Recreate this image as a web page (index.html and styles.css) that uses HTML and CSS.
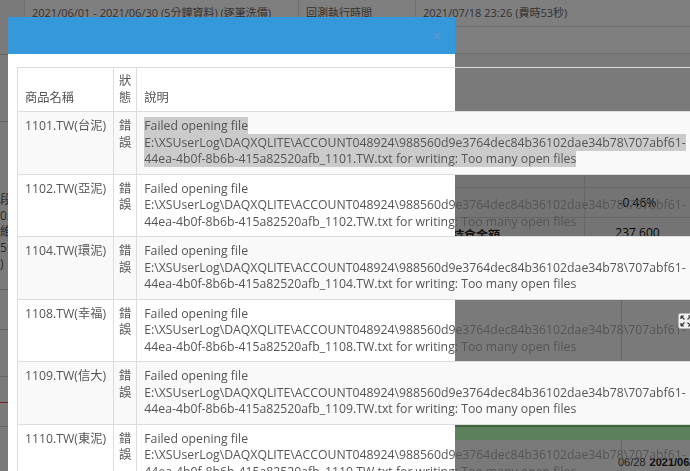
FILE: index.html
```html
<!DOCTYPE html>
<html>
  <head>
    <meta charset="utf-8" />
    <link rel="stylesheet" href="styles.css">
  </head>
  <body>
    <div class="page">
      <div class="side">
        <div class="s1"></div>
        <div class="s2"></div>
        <div class="s3">
          <p>段落</p>
          <p>0.5</p>
          <p>維持</p>
          <p>5分</p>
          <p>)</p>
        </div>
        <div class="s4"></div>
        <div class="s5"></div>
        <div class="s6"></div>
        <div class="s7"></div>
      </div>
      <div class="main">
        <div class="info">
          <div class="c1">2021/06/01 - 2021/06/30 (5分鐘資料) (逐筆洗價)</div>
          <div class="c2">回測執行時間</div>
          <div class="c3">2021/07/18 23:26 (費時53秒)</div>
        </div>
        <div class="info">
          <div class="c1">初始資金</div>
          <div class="c2">交易成本</div>
          <div class="c3"></div>
        </div>
        <div class="gap-a"></div>
        <div class="stats">
          <div></div><div></div><div></div>
          <div></div><div></div><div class="val">-0.46%</div>
          <div></div><div class="label">持倉金額</div><div class="val">237,600</div>
        </div>
        <div class="gap-b"></div>
        <div class="chart">
          <button class="expand">
            <svg width="16" height="16" viewBox="0 0 16 16">
              <rect x="0.5" y="0.5" width="15" height="15" rx="2" fill="#f2f2f2" stroke="#b5b5b5" />
              <path d="M3 3l3.5 3.5M3 3h3M3 3v3M13 3l-3.5 3.5M13 3h-3M13 3v3M3 13l3.5-3.5M3 13h3M3 13v-3M13 13l-3.5-3.5M13 13h-3M13 13v-3" stroke="#333" stroke-width="1.2" fill="none" />
            </svg>
          </button>
          <div class="plot"></div>
          <div class="bar"></div>
          <div class="axis">
            <span>06/28</span>
            <span class="today">2021/06/30</span>
          </div>
        </div>
      </div>
    </div>

    <div class="backdrop"></div>

    <div class="modal">
      <div class="modal-header">
        <span class="close">&times;</span>
      </div>
      <div class="modal-body">
        <table>
          <thead>
            <tr>
              <th class="name">商品名稱</th>
              <th class="state">狀態</th>
              <th>說明</th>
            </tr>
          </thead>
          <tbody>
            <tr>
              <td class="name">1101.TW(台泥)</td>
              <td class="state">錯誤</td>
              <td class="desc"><span class="selected">Failed opening file<br>E:\XSUserLog\DAQXQLITE\ACCOUNT048924\988560d9e3764dec84b36102dae34b78\707abf61-<br>44ea-4b0f-8b6b-415a82520afb_1101.TW.txt for writing: Too many open files</span></td>
            </tr>
            <tr>
              <td class="name">1102.TW(亞泥)</td>
              <td class="state">錯誤</td>
              <td class="desc">Failed opening file<br>E:\XSUserLog\DAQXQLITE\ACCOUNT048924\988560d9e3764dec84b36102dae34b78\707abf61-<br>44ea-4b0f-8b6b-415a82520afb_1102.TW.txt for writing: Too many open files</td>
            </tr>
            <tr>
              <td class="name">1104.TW(環泥)</td>
              <td class="state">錯誤</td>
              <td class="desc">Failed opening file<br>E:\XSUserLog\DAQXQLITE\ACCOUNT048924\988560d9e3764dec84b36102dae34b78\707abf61-<br>44ea-4b0f-8b6b-415a82520afb_1104.TW.txt for writing: Too many open files</td>
            </tr>
            <tr>
              <td class="name">1108.TW(幸福)</td>
              <td class="state">錯誤</td>
              <td class="desc">Failed opening file<br>E:\XSUserLog\DAQXQLITE\ACCOUNT048924\988560d9e3764dec84b36102dae34b78\707abf61-<br>44ea-4b0f-8b6b-415a82520afb_1108.TW.txt for writing: Too many open files</td>
            </tr>
            <tr>
              <td class="name">1109.TW(信大)</td>
              <td class="state">錯誤</td>
              <td class="desc">Failed opening file<br>E:\XSUserLog\DAQXQLITE\ACCOUNT048924\988560d9e3764dec84b36102dae34b78\707abf61-<br>44ea-4b0f-8b6b-415a82520afb_1109.TW.txt for writing: Too many open files</td>
            </tr>
            <tr>
              <td class="name">1110.TW(東泥)</td>
              <td class="state">錯誤</td>
              <td class="desc">Failed opening file<br>E:\XSUserLog\DAQXQLITE\ACCOUNT048924\988560d9e3764dec84b36102dae34b78\707abf61-<br>44ea-4b0f-8b6b-415a82520afb_1110.TW.txt for writing: Too many open files</td>
            </tr>
          </tbody>
        </table>
      </div>
    </div>
  </body>
</html>
```

FILE: styles.css
```css
* {
  margin: 0;
  padding: 0;
  box-sizing: border-box;
}

html,
body {
  height: 100%;
  overflow: hidden;
}

body {
  font-family: 'Open Sans', 'Noto Sans CJK TC', sans-serif;
  font-size: 12px;
  color: #666;
  background-color: #f4f4f4;
}

/* 배경 페이지 */
.page {
  display: flex;
  height: 100%;
}

.side {
  width: 25px;
  flex: none;
  overflow: hidden;
  white-space: nowrap;
  border-right: 1px solid #dcdcdc;
  color: #555;
}

.side > div {
  border-bottom: 1px solid #cfcfcf;
}

.s1 { height: 55px; }
.s2 { height: 67px; }
.s3 {
  height: 168px;
  padding-top: 70px;
  line-height: 16px;
}
.s4 { height: 40px; }
.s5 { height: 47px; }
.s6 {
  height: 26px;
  border-bottom-color: #e04040 !important;
}
.s7 { height: 24px; }

.main {
  flex: 1;
  min-width: 0;
  display: flex;
  flex-direction: column;
}

.info {
  display: flex;
  height: 27px;
  line-height: 26px;
  font-size: 11px;
  white-space: nowrap;
  background-color: #fff;
  border-bottom: 1px solid #dcdcdc;
}

.info > div {
  padding: 0 7px;
}

.info .c1 {
  width: 273px;
}

.info .c2 {
  width: 117px;
  border-left: 1px solid #dcdcdc;
}

.info .c3 {
  flex: 1;
  border-left: 1px solid #dcdcdc;
}

.gap-a {
  height: 106px;
}

.stats {
  display: grid;
  grid-template-columns: 427px 132px 1fr;
  grid-template-rows: 28px 30px 30px;
  background-color: #e8e8e8;
  line-height: 26px;
  white-space: nowrap;
}

.stats > div {
  border-bottom: 1px solid #cdcdcd;
}

.stats > div:nth-child(3n) {
  border-left: 1px solid #cdcdcd;
}

.stats .label {
  color: #222;
  font-weight: bold;
  padding-top: 5px;
}

.stats .val {
  text-align: center;
  color: #111;
  padding-top: 2px;
}

.gap-b {
  height: 42px;
}

.chart {
  position: relative;
  flex: 1;
  display: flex;
  flex-direction: column;
  background-image: linear-gradient(90deg, transparent 596px, #d0d0d0 596px, #d0d0d0 597px, transparent 597px);
}

.plot {
  height: 135px;
}

.bar {
  height: 15px;
  background-color: #b8ffb8;
  border-top: 2px solid #7cc97c;
}

.axis {
  display: flex;
  gap: 4px;
  padding: 15px 0 0 593px;
  line-height: 14px;
  font-family: 'Liberation Sans', sans-serif;
  font-size: 11px;
  color: #444;
  white-space: nowrap;
}

.axis .today {
  font-weight: bold;
  color: #222;
}

/* 확대 버튼은 배경 위에 떠 있음 */
.expand {
  position: absolute;
  top: 23px;
  right: -4px;
  z-index: 3;
  width: 16px;
  height: 16px;
  border: 0;
  background: none;
}

.expand svg {
  display: block;
}

/* 모달 */
.backdrop {
  position: fixed;
  top: 0;
  right: 0;
  bottom: 0;
  left: 0;
  z-index: 1;
  background-color: rgba(0, 0, 0, 0.5);
}

.modal {
  position: absolute;
  top: 17px;
  left: 8px;
  bottom: -200px;
  width: 447px;
  z-index: 2;
  background-color: #fff;
}

.modal-header {
  height: 37px;
  display: flex;
  align-items: center;
  justify-content: flex-end;
  padding-right: 13px;
  background-color: #3498db;
}

.close {
  color: #5f98c9;
  font-size: 17px;
  line-height: 1;
  cursor: pointer;
}

.modal-body {
  padding: 13px 9px;
}

table {
  border-collapse: collapse;
  border: 1px solid #dddddd;
  color: #555;
  font-size: 12.25px;
  line-height: 16.5px;
}

th,
td {
  border: 1px solid #dddddd;
  padding: 6px 7px;
  text-align: left;
  vertical-align: top;
}

th {
  font-weight: normal;
  vertical-align: bottom;
  padding: 5px 7px;
}

tbody tr:nth-child(odd) {
  background-color: #f9f9f9;
}

.name {
  white-space: nowrap;
}

.state {
  width: 1px;
  padding-left: 5px;
  padding-right: 5px;
}

.desc {
  white-space: nowrap;
}

.selected {
  background-color: #cbcbcb;
}
```
